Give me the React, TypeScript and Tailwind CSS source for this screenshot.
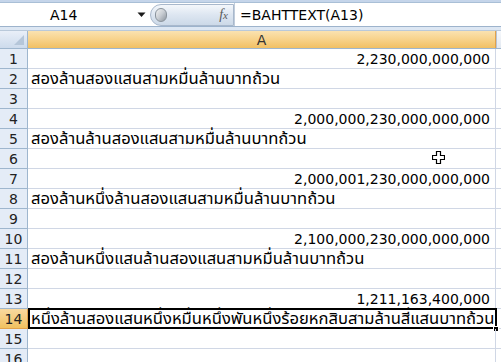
import React from "react";

const font = { fontFamily: 'Tahoma, "DejaVu Sans", "Noto Sans Thai", "Noto Sans", sans-serif' };

type Row = { n: number; text?: string; align?: "left" | "right" };

const rows: Row[] = [
  { n: 1, text: "2,230,000,000,000", align: "right" },
  { n: 2, text: "สองล้านสองแสนสามหมื่นล้านบาทถ้วน" },
  { n: 3 },
  { n: 4, text: "2,000,000,230,000,000,000", align: "right" },
  { n: 5, text: "สองล้านล้านสองแสนสามหมื่นล้านบาทถ้วน" },
  { n: 6 },
  { n: 7, text: "2,000,001,230,000,000,000", align: "right" },
  { n: 8, text: "สองล้านหนึ่งล้านสองแสนสามหมื่นล้านบาทถ้วน" },
  { n: 9 },
  { n: 10, text: "2,100,000,230,000,000,000", align: "right" },
  { n: 11, text: "สองล้านหนึ่งแสนล้านสองแสนสามหมื่นล้านบาทถ้วน" },
  { n: 12 },
  { n: 13, text: "1,211,163,400,000", align: "right" },
  { n: 14, text: "หนึ่งล้านสองแสนหนึ่งหมื่นหนึ่งพันหนึ่งร้อยหกสิบสามล้านสี่แสนบาทถ้วน" },
  { n: 15 },
  { n: 16 },
];

export default function App() {
  return (
    <div className="w-[501px] h-[362px] overflow-hidden bg-white relative text-black" style={font}>
      {/* top strip */}
      <div className="h-[3px] bg-[#c5d5ea] border-b border-[#a9bfd6]" />
      {/* formula bar */}
      <div className="h-[24px] flex items-center bg-white border-b border-[#9db3cc]">
        <div className="w-[150px] h-full flex items-center relative">
          <span className="absolute left-[50px] text-[14px] leading-none">A14</span>
          <svg className="absolute left-[137px] top-[9px]" width="9" height="6" viewBox="0 0 9 6">
            <path d="M0.5 0.5 L8.5 0.5 L4.5 5 Z" fill="#1a1a1a" />
          </svg>
        </div>
        <div className="w-[84px] h-[22px] rounded-l-full border border-[#a8b8cc] bg-gradient-to-b from-[#f4f7fb] via-[#dde6f1] to-[#ccd9e8] flex items-center justify-between pl-[4px] pr-[5px]">
          <div className="w-[12px] h-[14px] rounded-full bg-gradient-to-br from-[#f2f2f2] via-[#c8cdd3] to-[#8e969f] border border-[#8a939c]" />
          <span className="text-[14px] italic text-[#5a5a5a] leading-none" style={{ fontFamily: '"Liberation Serif", serif' }}>
            f<span className="text-[11px]">x</span>
          </span>
        </div>
        <div className="w-[1px] h-full bg-[#c0ccdb]" />
        <span className="ml-[5px] text-[14px] leading-none">=BAHTTEXT(A13)</span>
      </div>
      {/* band */}
      <div className="h-[4px] bg-[#dde7f3] border-b border-[#b9c9da]" />
      {/* column header */}
      <div className="h-[18px] flex border-b border-[#9eb6ce]">
        <div className="w-[28px] h-full bg-gradient-to-b from-[#e9eff8] to-[#cddbec] border-r border-[#9eb6ce] relative">
          <svg className="absolute right-[3px] bottom-[3px]" width="10" height="10" viewBox="0 0 10 10">
            <path d="M10 0 L10 10 L0 10 Z" fill="#b5c6d9" />
          </svg>
        </div>
        <div className="w-[468px] h-full bg-gradient-to-b from-[#fae2b0] via-[#f7d28a] to-[#f1c063] border-r border-[#e3a24a] flex items-center justify-center">
          <span className="text-[14px] leading-none text-[#333]">A</span>
        </div>
        <div className="flex-1 h-full bg-gradient-to-b from-[#f6f8fb] to-[#e3e9f1] border-l border-[#b8c4d2]" />
      </div>
      {/* rows */}
      {rows.map((r) => {
        const sel = r.n === 14;
        const right = r.align === "right";
        return (
          <div key={r.n} className="h-[20px] flex">
            <div
              className={
                "w-[28px] h-full border-r border-b flex items-center justify-center text-[14px] leading-none " +
                (sel
                  ? "bg-gradient-to-b from-[#f9d99f] to-[#f1c15f] border-[#e3a24a] text-[#222]"
                  : "bg-[#e4ecf7] border-[#9eb6ce] text-[#222]")
              }
            >
              {r.n}
            </div>
            <div
              className={
                "w-[468px] h-full border-b border-r border-[#d0d7e5] flex items-center leading-none whitespace-nowrap overflow-visible relative " +
                (right ? "justify-end pr-[5px] text-[14px]" : "justify-start pl-[3px] pt-[2px] text-[16.6px]")
              }
            >
              {r.text}
              {sel && (
                <>
                  <div className="absolute left-0 top-[-1px] w-[469px] h-[21px] border-2 border-black pointer-events-none" />
                  <div className="absolute right-[-4px] bottom-[-4px] w-[6px] h-[6px] bg-black border border-white" />
                </>
              )}
            </div>
            <div className="flex-1 h-full border-b border-[#d0d7e5]" />
          </div>
        );
      })}
      {/* cell cursor */}
      <svg className="absolute left-[432px] top-[151px]" width="13" height="13" viewBox="0 0 13 13">
        <path
          d="M4.5 0.5 H8.5 V4.5 H12.5 V8.5 H8.5 V12.5 H4.5 V8.5 H0.5 V4.5 H4.5 Z"
          fill="white"
          stroke="black"
          strokeWidth="1.2"
        />
      </svg>
    </div>
  );
}
